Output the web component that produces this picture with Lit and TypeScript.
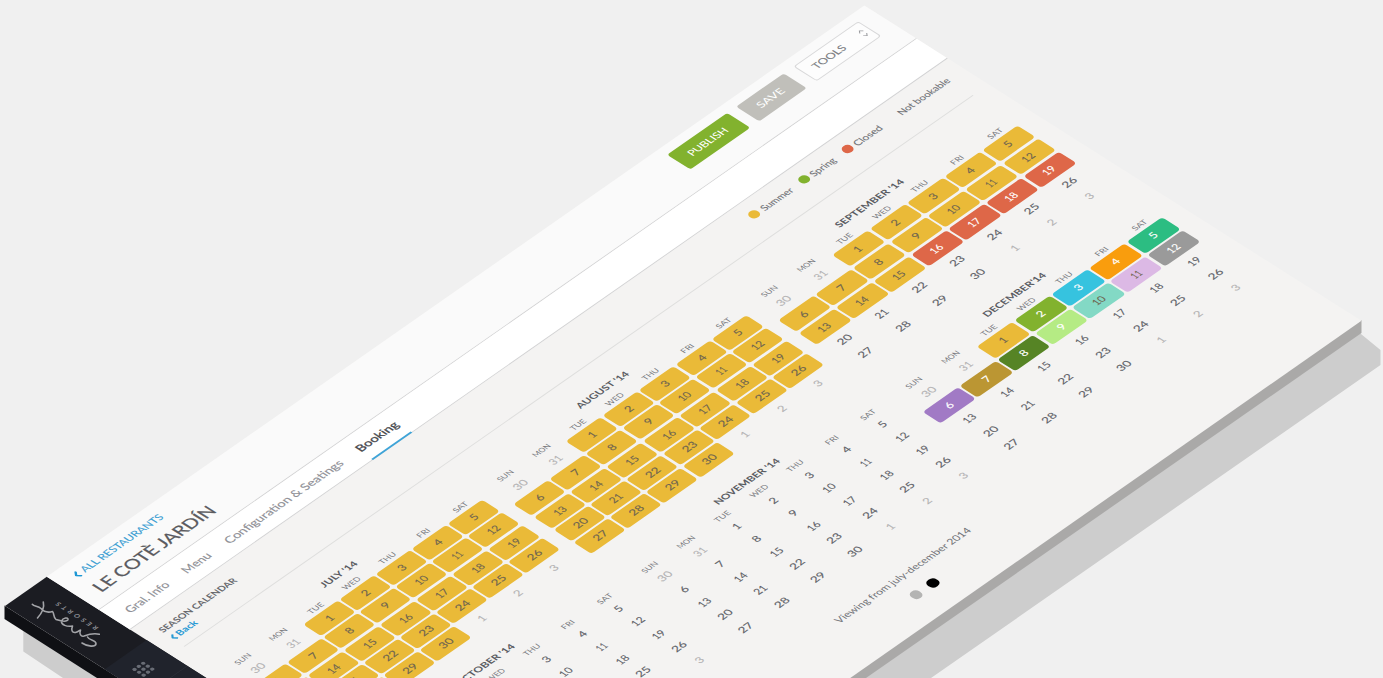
import { LitElement, html, css, svg, nothing } from "lit";
import { customElement, property, state } from "lit/decorators.js";
import { classMap } from "lit/directives/class-map.js";

/** A single line of text stretched horizontally to a given advance width. */
@customElement("fit-text")
class FitText extends LitElement {
  @property({ type: Number }) width = 0;
  @property() text = "";
  @state() private scale = 1;
  static styles = css`
    :host { display: inline-block; white-space: nowrap; flex: none; }
    span { display: inline-block; transform-origin: 0 50%; }
  `;
  firstUpdated() {
    const cs = getComputedStyle(this);
    const ctx = document.createElement("canvas").getContext("2d")!;
    ctx.font = `${cs.fontWeight} ${cs.fontSize} ${cs.fontFamily}`;
    this.scale = this.width / ctx.measureText(this.text).width;
  }
  render() {
    return html`<style>:host { width: ${this.width}px; }</style><span style="transform: scaleX(${this.scale})">${this.text}</span>`;
  }
}

type Tone = Record<number, string>;
interface Month { name: string; width: number; shift: number; nudge?: number; fills: Tone; light?: number[]; tall?: boolean; }

const YELLOW = "#eaba38";
const RED = "#de6748";
const range = (a: number, b: number, c: string): Tone => {
  const out: Tone = {};
  for (let i = a; i <= b; i++) out[i] = c;
  return out;
};

const MONTHS: Month[] = [
  { name: "JULY '14", width: 42, shift: 3, fills: range(1, 30, YELLOW) },
  { name: "AUGUST '14", width: 61, shift: 4, fills: range(1, 30, YELLOW) },
  { name: "SEPTEMBER '14", width: 80, shift: 8, nudge: 2.6, tall: true, fills: { ...range(1, 15, YELLOW), ...range(16, 19, RED) }, light: [16, 17, 18, 19] },
  { name: "OCTOBER '14", width: 69, shift: 4, fills: {} },
  { name: "NOVEMBER '14", width: 76.5, shift: 4, fills: {} },
  {
    name: "DECEMBER'14", width: 73, shift: 5, nudge: 0.8, tall: true,
    fills: {
      1: YELLOW, 2: "#82b22e", 3: "#36c3df", 4: "#f99d0d", 5: "#2cbd82", 6: "#a17ac5",
      7: "#bb9633", 8: "#568425", 9: "#b5eb84", 10: "#83d9c5", 11: "#dcb9e5", 12: "#9a9a9a",
    },
    light: [2, 3, 4, 5, 6, 7, 8, 9, 12],
  },
];
const DAYS: [string, number][] = [["SUN", 17], ["MON", 19], ["TUE", 16.5], ["WED", 19.5], ["THU", 17.5], ["FRI", 13], ["SAT", 15.5]];

@customElement("month-grid")
class MonthGrid extends LitElement {
  @property({ attribute: false }) month!: Month;
  static styles = css`
    :host { display: block; color: #606268; }
    * { box-sizing: border-box; }
    .name { height: 16px; line-height: 16.6px; text-align: center; font-size: 9.3px; font-weight: 700; color: #5a5c62; }
    .grid { display: grid; grid-template-columns: repeat(7, 1fr); column-gap: 2.3px; text-align: center; }
    .days { height: 14px; line-height: 14px; font-size: 7.7px; color: #77797e; }
    .cells { row-gap: 2.4px; grid-auto-rows: 21px; font-size: 10.3px; line-height: 21.3px; -webkit-text-stroke: 0.12px; }
    .cells.tall { grid-auto-rows: 21.5px; line-height: 21.8px; }
    .cell { border-radius: 3.5px; }
    .out { color: #b4b4b5; }
    .light { color: #fff; }
    .booked { color: #6f6550; }
  `;
  render() {
    const m = this.month;
    const cells = Array.from({ length: 35 }, (_, i) => {
      const n = i - 1;
      return n < 1 ? { n: n + 30 + 1, out: true } : n > 30 ? { n: n - 30, out: true } : { n, out: false };
    });
    return html`
      <div class="name" style="padding-right:${m.shift}px"><fit-text .text=${m.name} .width=${m.width}></fit-text></div>
      <div class="grid days">${DAYS.map(([d, w]) => html`<div><fit-text .text=${d} .width=${w}></fit-text></div>`)}</div>
      <div class=${classMap({ grid: true, cells: true, tall: !!m.tall })}>
        ${cells.map((c) => {
          const fill = c.out ? undefined : m.fills[c.n];
          const light = !c.out && !!m.light?.includes(c.n);
          const w = String(c.n).length === 1 ? 6.8 : c.n === 11 ? 9.5 : c.n < 20 || c.n === 31 || c.n === 21 ? 12 : 14;
          return html`<div
            class=${classMap({ cell: true, out: c.out, light, booked: !!fill && !light })}
            style="padding-right:${m.nudge ?? 0}px;${fill ? `background:${fill}` : ""}"
          ><fit-text .text=${String(c.n)} .width=${w}></fit-text></div>`;
        })}
      </div>`;
  }
}

@customElement("app-root")
class AppRoot extends LitElement {
  static styles = css`
    :host { display: block; position: relative; width: 1383px; height: 678px; overflow: hidden; background: #f0f0f0; font-family: Lato, "Open Sans", sans-serif; }
    * { box-sizing: border-box; }
    .solid, .script { position: absolute; left: 0; top: 0; width: 1383px; height: 678px; }
    .plane { position: absolute; left: 0; top: 0; width: 1047.5px; height: 578px; display: flex; transform-origin: 0 0; transform: matrix(0.82, -0.573, 0.86, 0.5455, 5, 606); background: #f4f3f2; }
    .side { width: 51.4px; background: #1b1c22; flex: none; }
    .logo { height: 116px; display: flex; justify-content: center; padding: 26px 0 0 14px; }
    .resorts { writing-mode: vertical-rl; transform: rotate(180deg); font-size: 6.5px; line-height: 8px; height: 50px; letter-spacing: 3.1px; color: #8d8f94; font-weight: 700; }
    .item { height: 47.5px; display: flex; align-items: center; justify-content: center; background: #20232c; border-bottom: 1px solid #2b2e37; }
    .item svg { width: 15px; height: 15px; margin-right: 6px; }
    .content { flex: 1; min-width: 0; }
    .head { height: 60.5px; background: #fafafa; border-bottom: 1px solid #d3d3d4; display: flex; justify-content: space-between; padding: 8.5px 17.9px 0 16.4px; }
    .all { height: 14px; line-height: 14px; font-size: 10.3px; color: #3c9fd3; display: flex; align-items: center; gap: 4.2px; -webkit-text-stroke: 0.1px; }
    .all svg { width: 5.5px; height: 9.5px; margin-top: 1.5px; }
    .title { margin-top: 8px; height: 20px; line-height: 20px; font-size: 17px; color: #5a5b60; -webkit-text-stroke: 0.25px; }
    .btns { display: flex; gap: 11.2px; padding-top: 1px; }
    .btn { height: 27.8px; border-radius: 3px; display: flex; align-items: center; justify-content: center; font-size: 10.2px; line-height: 18px; color: #fff; padding-right: 2.5px; }
    .publish { width: 73.5px; background: #82b22e; }
    .save { width: 58px; background: #c0bfba; }
    .tools { width: 79px; border: 1px solid #d8d8d9; color: #7c7e83; background: #fdfdfd; justify-content: space-between; padding: 0 4px 0 10.5px; -webkit-text-stroke: 0.12px; }
    .tools svg { width: 6px; height: 11px; }
    .tabs { height: 36.2px; background: #fff; border-bottom: 1px solid #d3d3d4; display: flex; gap: 20.4px; padding-left: 14.6px; font-size: 11.5px; line-height: 35.5px; color: #8f9096; -webkit-text-stroke: 0.15px; }
    .tab { height: 36.2px; }
    .on { color: #46474c; border-bottom: 2px solid #3ea4d8; -webkit-text-stroke: 0.3px; }
    .main { padding: 0 18.8px 0 15.9px; }
    .sub { height: 48.8px; border-bottom: 1px solid #dededd; display: flex; justify-content: space-between; }
    .season { padding-top: 14.5px; line-height: 12px; }
    .cal { height: 12px; font-size: 9px; font-weight: 700; color: #66686d; }
    .back { height: 13px; line-height: 13px; font-size: 9.3px; font-weight: 700; color: #2799d4; display: flex; align-items: center; gap: 2px; }
    .back svg { width: 5px; height: 8px; }
    .legend { display: flex; align-items: center; height: 38px; font-size: 9.5px; color: #707277; -webkit-text-stroke: 0.1px; }
    .dot { width: 10px; height: 10px; border-radius: 50%; flex: none; margin-top: -1px; }
    .key { display: flex; align-items: center; gap: 3.3px; margin-right: 11.4px; }
    .summer { background: #eaba38; }
    .spring { background: #82b22e; }
    .closed { background: #de6748; }
    .last { margin-right: 22.3px; }
    .months { display: grid; grid-template-columns: 306px 308.5px 317.5px; column-gap: 13.5px; grid-auto-rows: 168.3px; padding: 22.3px 0 0 0.8px; }
    .pager { display: flex; flex-direction: column; align-items: center; font-size: 10px; line-height: 14px; color: #707277; padding: 8.3px 0 0 2.4px; }
    .pages { display: flex; gap: 10px; margin-top: 13.6px; }
    .page { width: 10.4px; height: 10.4px; border-radius: 50%; background: #b4b4b3; }
    .current { background: #000; }
  `;

  private chevron(color: string) {
    return html`<svg viewBox="0 0 5 9" fill="none" stroke=${color} stroke-width="1.9" preserveAspectRatio="none"><path d="M4.2 .7 1.1 4.5 4.2 8.3" /></svg>`;
  }

  render() {
    const t = (text: string, width: number) => html`<fit-text .text=${text} .width=${width}></fit-text>`;
    return html`
      <svg class="solid" viewBox="0 0 1383 678">
        <path fill="#cdcdcd" d="M1350 325 1380.5 350V365L931 678H820ZM23.3 615V651.5L63 678H130Z" />
        <path fill="#aaa9a8" d="M1361.5 320V333L866 678H830Z" />
        <path fill="#0f1014" d="M4.5 605.5V619L97 678H130Z" />
      </svg>
      <div class="plane">
        <div class="side">
          <div class="logo"><div class="resorts">RESORTS</div></div>
          <div class="item">
            <svg viewBox="0 0 15 15" fill="#686c75">
              ${[2.2, 7.5, 12.8].map((y) => [2.2, 7.5, 12.8].map((x) => svg`<circle cx=${x} cy=${y} r="1.9" />`))}
            </svg>
          </div>
          <div class="item"></div>
        </div>
        <div class="content">
          <div class="head">
            <div>
              <div class="all">${this.chevron("#1c97d4")}${t("ALL RESTAURANTS", 96.8)}</div>
              <div class="title">${t("LE COTÈ JARDÍN", 142.5)}</div>
            </div>
            <div class="btns">
              <div class="btn publish">${t("PUBLISH", 45)}</div>
              <div class="btn save">${t("SAVE", 30)}</div>
              <div class="btn tools">
                ${t("TOOLS", 37)}
                <svg viewBox="0 0 6 11" fill="none" stroke="#9a9b9f" stroke-width=".9"><path d="M.8 3.6 3 1 5.2 3.6M.8 7.4 3 10 5.2 7.4" /></svg>
              </div>
            </div>
          </div>
          <div class="tabs">
            <div class="tab">${t("Gral. Info", 49)}</div>
            <div class="tab">${t("Menu", 31)}</div>
            <div class="tab">${t("Configuration & Seatings", 140)}</div>
            <div class="tab on">${t("Booking", 47.5)}</div>
          </div>
          <div class="main">
            <div class="sub">
              <div class="season">
                <div class="cal">${t("SEASON CALENDAR", 91)}</div>
                <div class="back">${this.chevron("#2799d4")}${t("Back", 22.5)}</div>
              </div>
              <div class="legend">
                <div class="key"><i class="dot summer"></i>${t("Summer", 35.8)}</div>
                <div class="key"><i class="dot spring"></i>${t("Spring", 28)}</div>
                <div class="key last"><i class="dot closed"></i>${t("Closed", 31.6)}</div>
                ${t("Not bookable", 60)}
              </div>
            </div>
            <div class="months">${MONTHS.map((m) => html`<month-grid .month=${m}></month-grid>`)}</div>
            <div class="pager">
              ${t("Viewing from july-december 2014", 162)}
              <div class="pages"><i class="page"></i><i class="page current"></i></div>
            </div>
          </div>
        </div>
      </div>
      <svg class="script" viewBox="0 0 1383 678" fill="none" stroke="#a3a4a8" stroke-width="1.6" stroke-linecap="round" stroke-linejoin="round">
        <path d="M32.3 604.3C34 606.5 38 606 41 608.5M43.3 602C44.5 607 42 613 37.5 618M41 608.5C45 613 49 612.5 52.5 611.5C54.5 613.5 53 617 56 619.5C61 621 67 622.5 68 619.5C68.5 617 63 617.5 61.5 621C61 625 67 627 72.5 626C71 630 72 633 75.5 632.5C79 631.5 79.5 630 80.5 630C79 634 81 637 84 636C88 634.5 95 633 99.3 634.3M87.5 637C89.5 641 96.5 640 96 644C95.3 647 88 647 82 643" />
      </svg>
    `;
  }
}
